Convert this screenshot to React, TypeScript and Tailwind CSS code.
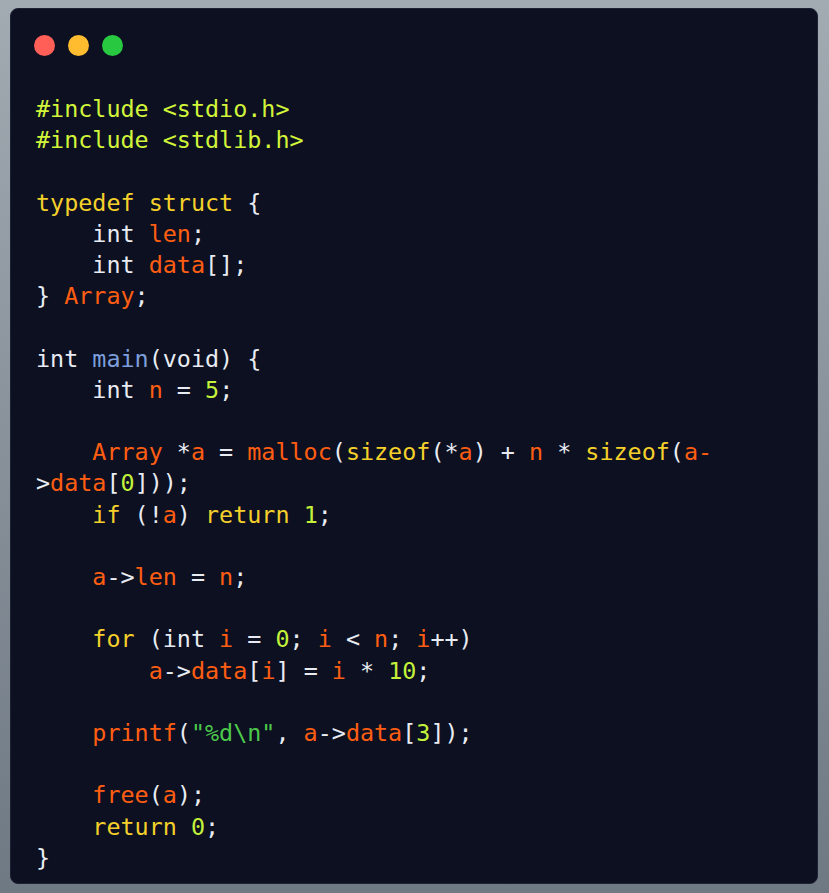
import React from "react";

type Tok = [string, string];

const W = "text-[#e8ecf2]";
const K = "text-[#f5d02a]";
const I = "text-[#ff5e12]";
const N = "text-[#c4f23a]";
const P = "text-[#d2f53a]";
const F = "text-[#7d9fdc]";
const S = "text-[#4cc94a]";

const lines: Tok[][] = [
  [[P, "#include <stdio.h>"]],
  [[P, "#include <stdlib.h>"]],
  [],
  [[K, "typedef"], [W, " "], [K, "struct"], [W, " {"]],
  [[W, "    int "], [I, "len"], [W, ";"]],
  [[W, "    int "], [I, "data"], [W, "[];"]],
  [[W, "} "], [I, "Array"], [W, ";"]],
  [],
  [[W, "int "], [F, "main"], [W, "(void) {"]],
  [[W, "    int "], [I, "n"], [W, " = "], [N, "5"], [W, ";"]],
  [],
  [
    [W, "    "],
    [I, "Array"],
    [W, " *"],
    [I, "a"],
    [W, " = "],
    [I, "malloc"],
    [W, "("],
    [K, "sizeof"],
    [W, "(*"],
    [I, "a"],
    [W, ") + "],
    [I, "n"],
    [W, " * "],
    [K, "sizeof"],
    [W, "("],
    [I, "a-"],
    [W, ">"],
    [I, "data"],
    [W, "["],
    [N, "0"],
    [W, "]));"],
  ],
  [[W, "    "], [K, "if"], [W, " (!"], [I, "a"], [W, ") "], [K, "return"], [W, " "], [N, "1"], [W, ";"]],
  [],
  [[W, "    "], [I, "a"], [W, "->"], [I, "len"], [W, " = "], [I, "n"], [W, ";"]],
  [],
  [
    [W, "    "],
    [K, "for"],
    [W, " (int "],
    [I, "i"],
    [W, " = "],
    [N, "0"],
    [W, "; "],
    [I, "i"],
    [W, " < "],
    [I, "n"],
    [W, "; "],
    [I, "i"],
    [W, "++)"],
  ],
  [
    [W, "        "],
    [I, "a"],
    [W, "->"],
    [I, "data"],
    [W, "["],
    [I, "i"],
    [W, "] = "],
    [I, "i"],
    [W, " * "],
    [N, "10"],
    [W, ";"],
  ],
  [],
  [
    [W, "    "],
    [I, "printf"],
    [W, "("],
    [S, '"%d\\n"'],
    [W, ", "],
    [I, "a"],
    [W, "->"],
    [I, "data"],
    [W, "["],
    [N, "3"],
    [W, "]);"],
  ],
  [],
  [[W, "    "], [I, "free"], [W, "("], [I, "a"], [W, ");"]],
  [[W, "    "], [K, "return"], [W, " "], [N, "0"], [W, ";"]],
  [[W, "}"]],
];

export default function App() {
  return (
    <div className="w-[829px] h-[893px] bg-gradient-to-b from-[#a2aab2] to-[#6f7983] pt-[8px] pl-[10px]">
      <div className="w-[808px] h-[876px] rounded-[8px] bg-[#0c1021] border border-[#1c2233] pt-[26px] pl-[25px] pr-[20px]">
        <div className="flex gap-[13px] ml-[-2px]">
          <div className="w-[21px] h-[21px] rounded-full bg-[#ff5f57]" />
          <div className="w-[21px] h-[21px] rounded-full bg-[#febc2e]" />
          <div className="w-[21px] h-[21px] rounded-full bg-[#28c840]" />
        </div>
        <pre
          className="mt-[38px] whitespace-pre-wrap text-[23.4px] leading-[31.2px] text-[#e8ecf2]"
          style={{ fontFamily: '"DejaVu Sans Mono", monospace' }}
        >
          {lines.map((ln, i) => (
            <div key={i} className="min-h-[31.2px]">
              {ln.map(([c, t], j) => (
                <span key={j} className={c}>
                  {t}
                </span>
              ))}
            </div>
          ))}
        </pre>
      </div>
    </div>
  );
}
